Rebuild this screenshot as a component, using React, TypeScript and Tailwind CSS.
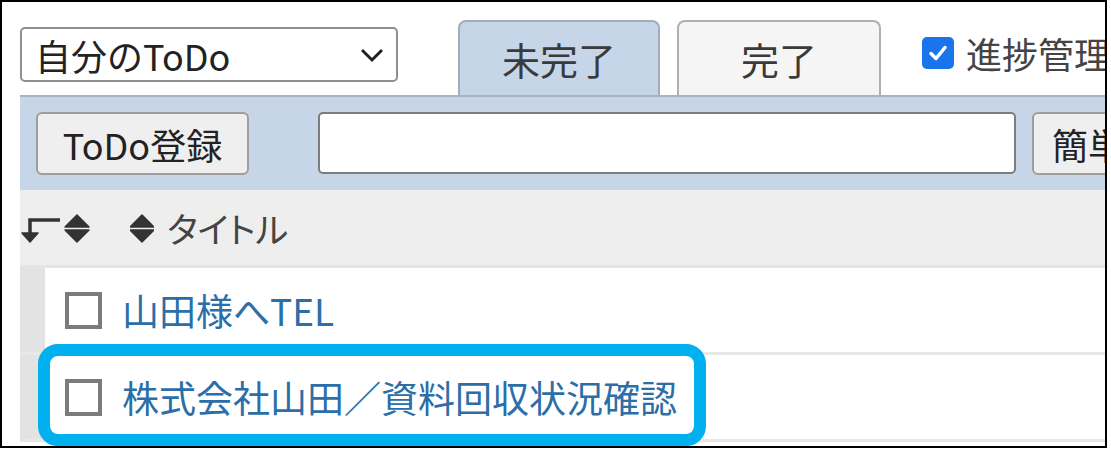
import React from "react"

const font = "font-['Noto_Sans_CJK_JP','Noto_Sans',sans-serif]"

function SortIcon() {
  return (
    <svg width="24" height="34" viewBox="0 0 24 34" className="flex-none">
      <polygon points="0,16 12,4 24,16" fill="#333" stroke="#333" strokeWidth="1.5" strokeLinejoin="round" />
      <polygon points="0,19 24,19 12,31" fill="#333" stroke="#333" strokeWidth="1.5" strokeLinejoin="round" />
    </svg>
  )
}

function Row({ title }: { title: string }) {
  return (
    <div className="flex h-[87px] flex-none border-b-[3px] border-[#e8e8e8]">
      <div className="w-[25px] flex-none bg-[#e3e3e3]" />
      <div className="flex flex-1 items-center bg-white pl-[20px]">
        <div className="h-[37px] w-[37px] flex-none border-[4px] border-[#7b7b7b] bg-white" />
        <span className="ml-[20px] whitespace-nowrap text-[37px] leading-none text-[#2b6ea8]">{title}</span>
      </div>
    </div>
  )
}

export default function App() {
  return (
    <div className="h-[449px] w-[1111px] bg-white">
      <div className={`relative flex h-[448px] w-[1107px] flex-col overflow-hidden border-2 border-black bg-white pl-[18px] pt-[18px] ${font}`}>
        {/* top row: list select, tabs, progress checkbox */}
        <div className="flex h-[75px] flex-none items-end">
          <div className="mb-[13px] flex h-[55px] w-[378px] flex-none items-center justify-between rounded-[5px] border-2 border-[#8f8f8f] bg-white pl-[13px] pr-[12px]">
            <span className="text-[36px] leading-none text-[#222]">自分のToDo</span>
            <svg width="24" height="16" viewBox="0 0 24 16">
              <polyline points="2,3 12,13 22,3" fill="none" stroke="#222" strokeWidth="3" />
            </svg>
          </div>
          <div className="ml-[60px] flex h-[75px] w-[202px] flex-none items-center justify-center rounded-t-[8px] border-2 border-b-0 border-[#a3adb8] bg-[#c6d5e7]">
            <span className="text-[38px] leading-none text-[#3a3a3a]">未完了</span>
          </div>
          <div className="ml-[17px] flex h-[75px] w-[204px] flex-none items-center justify-center rounded-t-[8px] border-2 border-b-0 border-[#b0b0b0] bg-[#f5f5f5]">
            <span className="text-[38px] leading-none text-[#3a3a3a]">完了</span>
          </div>
          <div className="mb-[24px] ml-[41px] flex flex-none items-center self-end">
            <div className="flex h-[32px] w-[32px] items-center justify-center rounded-[5px] bg-[#1a74ec]">
              <svg width="22" height="22" viewBox="0 0 22 22">
                <polyline points="4,11.5 9,16.5 18,5.5" fill="none" stroke="#fff" strokeWidth="3.5" strokeLinecap="round" strokeLinejoin="round" />
              </svg>
            </div>
            <span className="ml-[12px] whitespace-nowrap text-[36px] leading-none text-[#444]">進捗管理</span>
          </div>
        </div>

        {/* blue toolbar */}
        <div className="flex h-[95px] flex-none items-start border-t-2 border-[#a9b3be] bg-[#c6d5e7] pl-[16px] pt-[15px]">
          <button className="flex h-[63px] w-[213px] flex-none items-center justify-center rounded-[6px] border-2 border-[#9e9e9e] bg-[#efefef] text-[36px] leading-none text-[#222]">
            ToDo登録
          </button>
          <input className="ml-[69px] h-[62px] w-[698px] flex-none rounded-[5px] border-2 border-[#7d7d7d] bg-white" />
          <button className="ml-[16px] flex h-[63px] w-[110px] flex-none items-center whitespace-nowrap rounded-[6px] border-2 border-[#9e9e9e] bg-[#efefef] pl-[18px] text-[36px] leading-none text-[#222]">
            簡単
          </button>
        </div>

        {/* column header */}
        <div className="flex h-[78px] flex-none items-center border-b-[3px] border-[#e4e4e4] bg-[#eeeeee]">
          <svg width="72" height="34" viewBox="0 0 72 34" className="flex-none">
            <polyline points="40,9 10,9 10,24" fill="none" stroke="#333" strokeWidth="3.5" />
            <polygon points="2,22 18,22 10,31" fill="#333" stroke="#333" strokeWidth="1.5" strokeLinejoin="round" />
            <polygon points="45,16 57,4 69,16" fill="#333" stroke="#333" strokeWidth="1.5" strokeLinejoin="round" />
            <polygon points="45,19 69,19 57,31" fill="#333" stroke="#333" strokeWidth="1.5" strokeLinejoin="round" />
          </svg>
          <div className="ml-[38px]">
            <SortIcon />
          </div>
          <span className="ml-[13px] text-[35px] leading-none text-[#444] [font-feature-settings:'palt']">タイトル</span>
        </div>

        <Row title="山田様へTEL" />
        <Row title="株式会社山田／資料回収状況確認" />

        {/* highlight frame */}
        <div className="absolute left-[36px] top-[342px] h-[102px] w-[668px] rounded-[20px] border-[12px] border-[#00b0ef]" />
      </div>
    </div>
  )
}
